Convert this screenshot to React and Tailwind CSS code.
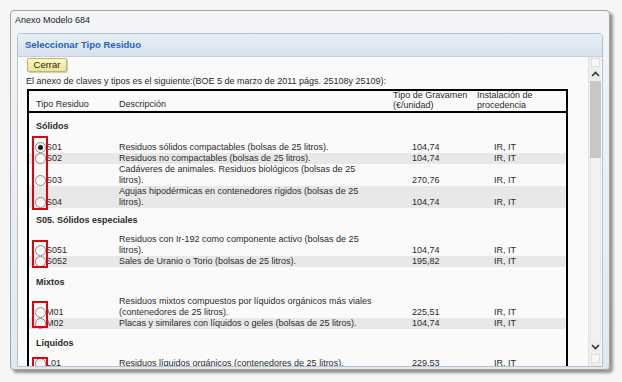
import React from 'react';

const groups = [
  {
    title: 'Sólidos', h: 'h-[29px]', pt: 'pt-[8px]', box: 'top-[-6px] h-[74px]',
    items: [
      { code: 'S01', desc: ['Residuos sólidos compactables (bolsas de 25 litros).'], price: '104,74', checked: true },
      { code: 'S02', desc: ['Residuos no compactables (bolsas de 25 litros).'], price: '104,74' },
      { code: 'S03', desc: ['Cadáveres de animales. Residuos biológicos (bolsas de 25', 'litros).'], price: '270,76' },
      { code: 'S04', desc: ['Agujas hipodérmicas en contenedores rígidos (bolsas de 25', 'litros).'], price: '104,74' },
    ],
  },
  {
    title: 'S05. Sólidos especiales', h: 'h-[26px]', pt: 'pt-[7px]', box: 'top-[6px] h-[28px]',
    items: [
      { code: 'S051', desc: ['Residuos con Ir-192 como componente activo (bolsas de 25', 'litros).'], price: '104,74' },
      { code: 'S052', desc: ['Sales de Uranio o Torio (bolsas de 25 litros).'], price: '195,82' },
    ],
  },
  {
    title: 'Mixtos', h: 'h-[29px]', pt: 'pt-[10px]', box: 'top-[5px] h-[27px]',
    items: [
      { code: 'M01', desc: ['Residuos mixtos compuestos por líquidos orgánicos más viales', '(contenedores de 25 litros).'], price: '225,51' },
      { code: 'M02', desc: ['Placas y similares con líquidos o geles (bolsas de 25 litros).'], price: '104,74' },
    ],
  },
  {
    title: 'Liquidos', h: 'h-[29px]', pt: 'pt-[9px]', box: 'top-[-1px] h-[24px]',
    items: [
      { code: 'L01', desc: ['Residuos líquidos orgánicos (contenedores de 25 litros).'], price: '229,53' },
    ],
  },
];

function Radio({ checked }) {
  return (
    <span className="w-[11px] h-[11px] rounded-full border border-[#8c8c8c] bg-gradient-to-b from-[#f2f2f2] to-[#ffffff] flex items-center justify-center shrink-0">
      {checked && <span className="w-[5px] h-[5px] rounded-full bg-[#1a1a1a]" />}
    </span>
  );
}

function Chevron({ up }) {
  return (
    <svg width="9" height="6" viewBox="0 0 9 6">
      <path d={up ? 'M1 5 L4.5 1.5 L8 5' : 'M1 1 L4.5 4.5 L8 1'} fill="none" stroke="#333" strokeWidth="1.6" />
    </svg>
  );
}

export default function App() {
  return (
    <div className="w-[622px] h-[382px] bg-[#f6f6f6] pl-[10px] pt-[10px] overflow-hidden font-['Liberation_Sans',Arial,sans-serif] text-[#2a2a2a]">
      {/* window */}
      <div className="w-[600px] h-[360px] border border-[#9ba3ab] rounded-[4px] bg-gradient-to-b from-[#f3f5f7] to-[#e3e9ef] shadow-[3px_3px_3px_rgba(0,0,0,0.4)] flex flex-col">
        <div className="h-[18px] pl-[4px] text-[9px] leading-[18px] text-[#222]">Anexo Modelo 684</div>

        {/* panel */}
        <div className="flex-1 mt-[4px] mx-[6px] mb-[2px] border border-[#b4c2d0] rounded-t-[4px] flex flex-col overflow-hidden">
          <div className="h-[23px] shrink-0 bg-gradient-to-b from-[#e7eef5] to-[#d8e3ed] border-b border-[#c3d0dc] pl-[7px] flex items-center text-[9.5px] font-bold text-[#1d63c6]">
            Seleccionar Tipo Residuo
          </div>

          <div className="flex-1 flex bg-[#fafafa] overflow-hidden">
            {/* content */}
            <div className="flex-1 pl-[9px] pt-[1px] overflow-hidden">
              <button className="block w-[40px] h-[14px] border border-[#bdb46e] rounded-[2px] bg-gradient-to-b from-[#fbf8c4] to-[#ede58f] shadow-[1px_1px_1px_rgba(0,0,0,0.2)] text-[9.5px] leading-[12px] text-[#222]">
                Cerrar
              </button>
              <div className="mt-[4px] -ml-[1px] text-[9px] leading-[11px] whitespace-nowrap">
                El anexo de claves y tipos es el siguiente:(BOE 5 de marzo de 2011 págs. 25108y 25109):
              </div>

              {/* table */}
              <div className="mt-[2px] w-[541px] border-2 border-black text-[9px] leading-[11px]">
                <div className="flex h-[22px] border-b-2 border-black">
                  <div className="w-[88px] pl-[7px] self-end pb-[1px]">Tipo Residuo</div>
                  <div className="w-[274px] pl-[2px] self-end pb-[1px]">Descripción</div>
                  <div className="w-[84px] pl-[2px] leading-[9.5px]">
                    Tipo de Gravamen<br />(€/unidad)
                  </div>
                  <div className="flex-1 pl-[2px] leading-[9.5px]">
                    Instalación de<br />procedencia
                  </div>
                </div>

                {groups.map(g => (
                  <div key={g.title}>
                    <div className={`${g.h} ${g.pt} pl-[7px] font-bold`}>{g.title}</div>
                    <div className="relative">
                      {g.items.map((it, i) => (
                        <div key={it.code} className={`flex items-end ${i % 2 === 1 ? 'bg-[#e8e8e8]' : ''}`}>
                          <div className="w-[88px] pl-[6px] flex items-center">
                            <Radio checked={it.checked} />
                            <span>{it.code}</span>
                          </div>
                          <div className="w-[274px] pl-[2px] whitespace-nowrap">
                            {it.desc.map((l, k) => <div key={k}>{l}</div>)}
                          </div>
                          <div className="w-[84px] pl-[21px]">{it.price}</div>
                          <div className="flex-1 pl-[19px]">IR, IT</div>
                        </div>
                      ))}
                      <div className={`absolute left-[3px] w-[16px] border-2 border-[#e3000f] ${g.box}`} />
                    </div>
                  </div>
                ))}
              </div>
            </div>

            {/* scrollbar */}
            <div className="w-[13px] mr-[1px] shrink-0 bg-[#eeeeee] border-l border-[#e2e2e2] flex flex-col items-center">
              <div className="w-[9px] h-[9px] mt-[1px] border border-[#e0e0e0] bg-[#f6f6f6]" />
              <div className="h-[14px] flex items-center"><Chevron up /></div>
              <div className="w-[11px] h-[77px] bg-[#c7c7c7]" />
              <div className="flex-1 w-[11px] border-x border-[#e4e4e4] bg-[#f1f1f1]" />
              <div className="h-[14px] flex items-center"><Chevron /></div>
              <div className="w-[9px] h-[9px] mb-[3px] border border-[#e0e0e0] bg-[#f6f6f6]" />
            </div>
          </div>
        </div>
      </div>
    </div>
  );
}
